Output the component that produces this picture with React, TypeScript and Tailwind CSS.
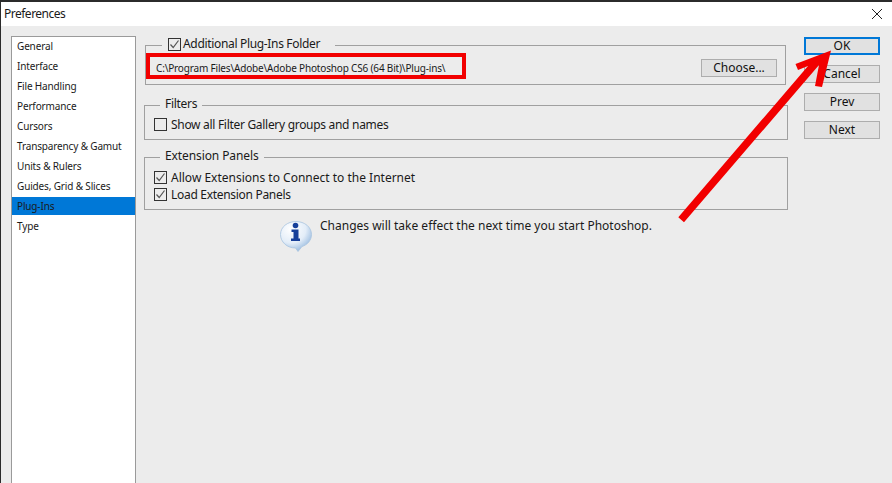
const sidebarItems = [
  "General",
  "Interface",
  "File Handling",
  "Performance",
  "Cursors",
  "Transparency & Gamut",
  "Units & Rulers",
  "Guides, Grid & Slices",
  "Plug-Ins",
  "Type",
]

const CheckBox = ({ checked }: { checked: boolean }) => (
  <span className="flex h-[13px] w-[13px] shrink-0 items-center justify-center border border-[#333333] bg-[#ececec]">
    {checked && (
      <svg width="11" height="11" viewBox="0 0 11 11" fill="none">
        <path d="M1.5 5.5 L4.2 8.5 L9.5 1.5" stroke="#555555" strokeWidth="1.2" />
      </svg>
    )}
  </span>
)

const SideButton = ({ label, focused }: { label: string; focused?: boolean }) => (
  <button
    className={
      focused
        ? "h-[18px] w-[76px] border-2 border-[#0078d7] bg-[#e1e1e1] text-[12px] leading-[14px] text-[#111111]"
        : "h-[18px] w-[76px] border border-[#adadad] bg-[#e1e1e1] text-[12px] leading-[16px] text-[#111111]"
    }
  >
    {label}
  </button>
)

const InfoIcon = () => (
  <svg className="mt-[4px] shrink-0" width="32" height="31" viewBox="0 0 32 31">
    <defs>
      <radialGradient id="bubble" cx="0.35" cy="0.25" r="0.85">
        <stop offset="0" stopColor="#ffffff" />
        <stop offset="0.55" stopColor="#e3edf8" />
        <stop offset="1" stopColor="#86aed9" />
      </radialGradient>
    </defs>
    <path
      d="M16 0.5 C24.5 0.5 31.5 6 31.5 13.5 C31.5 19.5 27 24 22 25.5 L18 30.5 L15.5 27 C7 27 0.5 21 0.5 13.5 C0.5 6 7.5 0.5 16 0.5 Z"
      fill="url(#bubble)"
      stroke="#a8c4e0"
      strokeWidth="0.8"
    />
    <circle cx="15.5" cy="4.5" r="2.8" fill="#17409a" />
    <path d="M11.5 8.5 H18.5 V17.5 H20 V20 H11 V17.5 H13.5 V11 H11.5 Z" fill="#17409a" />
  </svg>
)

export default function App() {
  return (
    <div className="relative flex h-[483px] w-[892px] flex-col overflow-hidden border-l border-t-2 border-[#2b2b2b] border-b-0 border-r-0 bg-[#ececec] font-['Noto_Sans',sans-serif] text-[#1a1a1a]">
      <div className="flex h-[24px] shrink-0 items-center justify-between bg-white pl-[3px] pr-[9px]">
        <span className="text-[12px] tracking-[-0.5px]">Preferences</span>
        <svg width="12" height="12" viewBox="0 0 12 12" fill="none">
          <path d="M1 1 L11 11 M11 1 L1 11" stroke="#222222" strokeWidth="1" />
        </svg>
      </div>

      <div className="flex flex-1 pl-[10px] pt-[10px]">
        <div className="flex w-[125px] shrink-0 flex-col gap-[2px] border border-b-0 border-[#9a9a9a] bg-white">
          {sidebarItems.map((item) => (
            <div
              key={item}
              className={
                item === "Plug-Ins"
                  ? "flex h-[18px] items-center bg-[#0078d7] pl-[5px] text-[10px] tracking-[-0.15px]"
                  : "flex h-[18px] items-center pl-[5px] text-[10px] tracking-[-0.15px]"
              }
            >
              {item}
            </div>
          ))}
        </div>

        <div className="ml-[8px] w-[644px] shrink-0 text-[12px]">
          <fieldset className="relative ml-[1px] h-[49px] w-[641px] border border-[#a0a0a0] px-[1px] pt-[5px]">
            <legend className="ml-[15px] flex h-[18px] items-center gap-[2px] pb-[2px] pl-[6px] pr-[15px] leading-[16px] tracking-[-0.33px]">
              <CheckBox checked />
              <span>Additional Plug-Ins Folder</span>
            </legend>
            <div className="flex items-center justify-between pl-[9px] pr-[7px]">
              <span className="text-[10px] tracking-[-0.17px]">
                {"C:\\Program Files\\Adobe\\Adobe Photoshop CS6 (64 Bit)\\Plug-ins\\"}
              </span>
              <SideButton label="Choose..." />
            </div>
            <div className="absolute left-0 top-[-1px] h-[26px] w-[320px] border-4 border-[#f20000]" />
          </fieldset>

          <fieldset className="mt-[11px] h-[44px] w-[644px] border border-[#a0a0a0] pl-[9px] pt-[2px]">
            <legend className="ml-[6px] px-[5px] pb-[2px] leading-[16px] tracking-[-0.3px]">Filters</legend>
            <div className="flex items-center gap-[4px]">
              <CheckBox checked={false} />
              <span className="leading-[17px] tracking-[-0.3px]">Show all Filter Gallery groups and names</span>
            </div>
          </fieldset>

          <fieldset className="mt-[8px] h-[62px] w-[644px] border border-[#a0a0a0] pl-[9px] pt-[3px]">
            <legend className="ml-[6px] px-[5px] pb-[2px] leading-[16px] tracking-[-0.1px]">Extension Panels</legend>
            <div className="flex items-center gap-[4px]">
              <CheckBox checked />
              <span className="leading-[17px]">Allow Extensions to Connect to the Internet</span>
            </div>
            <div className="flex items-center gap-[4px]">
              <CheckBox checked />
              <span className="leading-[17px] tracking-[-0.3px]">Load Extension Panels</span>
            </div>
          </fieldset>

          <div className="ml-[136px] mt-[7px] flex items-start gap-[8px]">
            <InfoIcon />
            <span className="leading-[17px]">Changes will take effect the next time you start Photoshop.</span>
          </div>
        </div>

        <div className="ml-[16px] flex flex-col gap-[10px] pt-[1px]">
          <SideButton label="OK" focused />
          <SideButton label="Cancel" />
          <SideButton label="Prev" />
          <SideButton label="Next" />
        </div>
      </div>

      <svg className="pointer-events-none absolute left-[-1px] top-[-2px]" width="892" height="483" viewBox="0 0 892 483">
        <path
          d="M678.3 217.3 L808 66 L798 70 L795.5 64 L831 50.5 L822 87 L815 86 L819 65 L684 222.3 Z"
          fill="#f20000"
        />
      </svg>
    </div>
  )
}
